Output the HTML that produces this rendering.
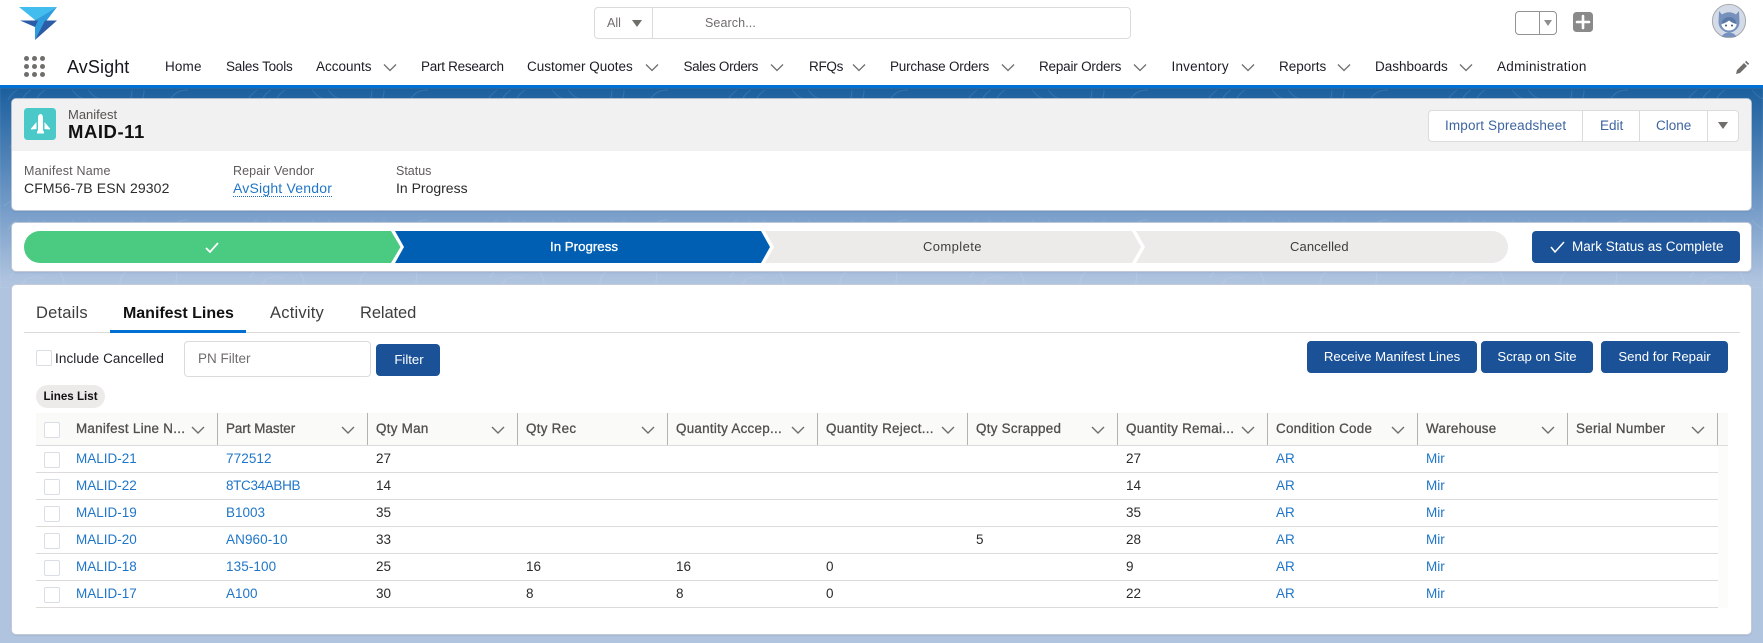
<!DOCTYPE html>
<html><head><meta charset="utf-8"><style>
*{box-sizing:border-box}
html,body{margin:0;padding:0;width:1763px;height:643px;overflow:hidden;background:#b0c4df}
body{position:relative;font-family:"Liberation Sans",sans-serif;font-size:13px;color:#181818}
.t{position:absolute;white-space:nowrap;line-height:16px}
.card{position:absolute;left:12px;width:1739px;background:#fff;border-radius:4px;box-shadow:0 0 0 1px rgba(200,205,215,.85),0 1px 2px rgba(40,60,100,.2)}
.nav{position:absolute;top:59px;line-height:16px;font-size:13.5px;color:#1c1e26;white-space:nowrap}
.blue{color:#1f76c8}
.btn{position:absolute;background:#1b5297;color:#fff;border-radius:4px;text-align:center;font-size:13.2px;height:32px;line-height:31px;white-space:nowrap}
.cb{position:absolute;width:16px;height:16px;background:#fff;border:1px solid #d8dde6;border-radius:2px}
.row{position:absolute;left:36px;width:1682px;height:27px;border-bottom:1px solid #dddbda}
.row span{position:absolute;top:5px;line-height:16px;font-size:13.5px;color:#2b2b2b}
.row a{position:absolute;top:5px;line-height:16px;font-size:13.5px;color:#1f76c8;text-decoration:none}
.h{position:absolute;top:413px;height:32px;line-height:32px;font-size:13.4px;color:#514f4d;white-space:nowrap;-webkit-text-stroke:.3px #514f4d;letter-spacing:.28px}
.d{position:absolute;top:413px;width:1px;height:32px;background:#b5b3b1}
</style></head><body>

<!-- page gradient and texture -->
<div style="position:absolute;left:0;top:88px;width:1763px;height:270px;background:linear-gradient(#1b5f9e 0,#6f98c6 42%,#b0c4df 72%,#b0c4df 100%)"></div>
<svg style="position:absolute;left:0;top:88px" width="1763" height="200" fill="none" stroke="#fff" stroke-opacity=".1" stroke-width="1">
<defs><pattern id="p" width="240" height="130" patternUnits="userSpaceOnUse">
<path d="M8 12c3-6 6-8 9-10M22 12c3-6 6-8 9-10M36 12c3-6 6-8 9-10M72 2c8 10 14 10 20 10M88 2c8 10 14 10 20 10M130 12c2-4 2-7 2-10M142 12c2-4 2-7 2-10M170 12c5-8 10-10 18-10"/>
<path d="M10 60c10-22 42-22 52-2s-16 36-32 26-8-30 12-24"/>
<path d="M110 40c24-16 60-8 66 14s-28 34-46 24-10-30 12-26"/>
<path d="M186 100c18-14 44-8 48 10M4 118c20-16 50-12 70 4M90 120c14-10 26-12 40-8"/>
</pattern></defs>
<rect width="1763" height="200" fill="url(#p)"/>
</svg>

<!-- top bar -->
<div style="position:absolute;left:0;top:0;width:1763px;height:85px;background:#fff"></div>
<div style="position:absolute;left:0;top:85px;width:1763px;height:3px;background:#0070d2"></div>

<svg style="position:absolute;left:19px;top:6px" width="40" height="36" viewBox="19 6 40 36">
<polygon points="19,7 57,7 35,20" fill="#43bdee"/>
<polygon points="57,7 35,20 35,40 47,20" fill="#2f9ddd"/>
<polygon points="20,20.500 38,20.500 35,27" fill="#2d5ca6"/>
<polygon points="45,20.500 57,20.500 35,40" fill="#2d5ca6"/>
</svg>

<svg style="position:absolute;left:23px;top:55px" width="24" height="24" fill="#706e6b">
<circle cx="3.500" cy="3.500" r="2.500"/><circle cx="11.500" cy="3.500" r="2.500"/><circle cx="19.500" cy="3.500" r="2.500"/>
<circle cx="3.500" cy="11.500" r="2.500"/><circle cx="11.500" cy="11.500" r="2.500"/><circle cx="19.500" cy="11.500" r="2.500"/>
<circle cx="3.500" cy="19.500" r="2.500"/><circle cx="11.500" cy="19.500" r="2.500"/><circle cx="19.500" cy="19.500" r="2.500"/>
</svg>
<div class="t" style="left:67px;top:56px;line-height:22px;font-size:18px;color:#16181f;letter-spacing:.1px">AvSight</div>

<!-- search -->
<div style="position:absolute;left:594px;top:7px;width:537px;height:32px;background:#fff;border:1px solid #dddbda;border-radius:4px"></div>
<div style="position:absolute;left:652px;top:8px;width:1px;height:30px;background:#dddbda"></div>
<div class="t" style="left:607px;top:15px;font-size:12.500px;color:#706e6b">All</div>
<svg style="position:absolute;left:632px;top:19px" width="11" height="9"><polygon points="0,1 10,1 5,8" fill="#706e6b"/></svg>
<div class="t" style="left:705px;top:15px;font-size:12.500px;color:#706e6b;letter-spacing:.1px">Search...</div>

<!-- favourites, plus, avatar -->
<div style="position:absolute;left:1515px;top:11px;width:42px;height:24px;background:#fff;border:1px solid #939393;border-radius:4px"></div>
<div style="position:absolute;left:1539px;top:11px;width:1px;height:24px;background:#939393"></div>
<svg style="position:absolute;left:1544px;top:20px" width="9" height="7"><polygon points="0,0 8,0 4,6" fill="#8e8e8e"/></svg>
<svg style="position:absolute;left:1573px;top:12px" width="20" height="20"><rect width="20" height="20" rx="3.500" fill="#8a8a8a"/><path d="M10 4v12M4 10h12" stroke="#fff" stroke-width="2.600" stroke-linecap="round"/></svg>
<svg style="position:absolute;left:1711px;top:3px" width="36" height="36" viewBox="0 0 36 36">
<circle cx="18" cy="18" r="16.600" fill="#d3dbe9" stroke="#a8a8a8" stroke-width="1"/>
<path d="M8 8l3 3.500a12 12 0 0 1 14 0L28 8l.5 11a10.500 10.500 0 0 1-21 0z" fill="#7692bc"/>
<ellipse cx="18" cy="21" rx="7.500" ry="6.500" fill="#fff"/>
<path d="M10.500 21c3-.5 5.500-2 7.500-3.500 2 1.500 4.500 3 7.500 3.500a7.500 7 0 0 0-15 0z" fill="#5c7aa8"/>
<circle cx="15" cy="22.500" r="1" fill="#34507f"/><circle cx="21" cy="22.500" r="1" fill="#34507f"/>
<path d="M11 34a7 4.500 0 0 1 14 0z" fill="#7692bc"/>
</svg>

<!-- nav -->
<div class="nav" style="left:165px;letter-spacing:.15px">Home</div>
<div class="nav" style="left:226px;letter-spacing:-.2px">Sales Tools</div>
<div class="nav" style="left:316px">Accounts</div>
<div class="nav" style="left:421px;letter-spacing:-.27px">Part Research</div>
<div class="nav" style="left:527px">Customer Quotes</div>
<div class="nav" style="left:683.500px;letter-spacing:-.35px">Sales Orders</div>
<div class="nav" style="left:809px;letter-spacing:-.3px">RFQs</div>
<div class="nav" style="left:890px;letter-spacing:-.2px">Purchase Orders</div>
<div class="nav" style="left:1039px;letter-spacing:-.2px">Repair Orders</div>
<div class="nav" style="left:1171.500px;letter-spacing:.2px">Inventory</div>
<div class="nav" style="left:1279px">Reports</div>
<div class="nav" style="left:1375px">Dashboards</div>
<div class="nav" style="left:1497px;letter-spacing:.3px">Administration</div>
<svg style="position:absolute;left:0;top:0" width="1763" height="85" fill="none" stroke="#706e6b" stroke-width="1.300">
<path d="M384 64.500l6 6 6-6M646 64.500l6 6 6-6M771 64.500l6 6 6-6M853 64.500l6 6 6-6M1002 64.500l6 6 6-6M1134 64.500l6 6 6-6M1242 64.500l6 6 6-6M1338 64.500l6 6 6-6M1460 64.500l6 6 6-6"/>
<path d="M1736 74l1-4 7-7 3 3-7 7zM1745 62l1.200-1.200 3 3L1748 65z" fill="#706e6b" stroke="none"/>
</svg>

<!-- header card -->
<div class="card" style="top:99px;height:111px;overflow:hidden">
  <div style="position:absolute;left:0;top:0;width:100%;height:52px;background:#f1f1f1"></div>
</div>
<svg style="position:absolute;left:24px;top:108px" width="32" height="32" viewBox="0 0 32 32">
<rect width="32" height="32" rx="3.500" fill="#4bc8c8"/>
<path d="M16.500 6c1.700 0 2.500 2 2.500 4v12l1 2v1.500h-7V24l1-2V10c0-2 .8-4 2.500-4z" fill="#fff"/>
<path d="M12.500 14L7 20.500c-.3.5 0 1 .5 1l5-.5zM20.500 14l5.500 6.500c.3.5 0 1-.5 1l-5-.5z" fill="#fff"/>
</svg>
<div class="t" style="left:68px;top:107px;font-size:13px;color:#55534f">Manifest</div>
<div class="t" style="left:68px;top:121px;line-height:22px;font-size:18.500px;font-weight:bold;color:#111;letter-spacing:.55px">MAID-11</div>
<div class="t" style="left:24px;top:163px;font-size:12.500px;color:#5e5c5a;letter-spacing:.2px">Manifest Name</div>
<div class="t" style="left:24px;top:180px;font-size:14px;color:#2b2b2b;letter-spacing:.13px">CFM56-7B ESN 29302</div>
<div class="t" style="left:233px;top:163px;font-size:12.500px;color:#5e5c5a;letter-spacing:.1px">Repair Vendor</div>
<div class="t blue" style="left:233px;top:180px;font-size:14px;border-bottom:1px dotted #1f6fc0;height:17px;letter-spacing:.2px">AvSight Vendor</div>
<div class="t" style="left:396px;top:163px;font-size:12.500px;color:#5e5c5a">Status</div>
<div class="t" style="left:396px;top:180px;font-size:14px;color:#2b2b2b">In Progress</div>

<!-- header buttons -->
<div style="position:absolute;left:1428px;top:110px;width:311px;height:32px;background:#fff;border:1px solid #dddbda;border-radius:4px"></div>
<div style="position:absolute;left:1582px;top:111px;width:1px;height:30px;background:#dddbda"></div>
<div style="position:absolute;left:1639px;top:111px;width:1px;height:30px;background:#dddbda"></div>
<div style="position:absolute;left:1707px;top:111px;width:1px;height:30px;background:#dddbda"></div>
<div class="t" style="left:1445px;top:118px;font-size:13.500px;color:#3d65a0;letter-spacing:.15px">Import Spreadsheet</div>
<div class="t" style="left:1600px;top:118px;font-size:13.500px;color:#3d65a0">Edit</div>
<div class="t" style="left:1656px;top:118px;font-size:13.500px;color:#3d65a0">Clone</div>
<svg style="position:absolute;left:1718px;top:121px" width="11" height="9"><polygon points="0,1 10,1 5,8" fill="#706e6b"/></svg>

<!-- path card -->
<div class="card" style="top:223px;height:48px"></div>
<svg style="position:absolute;left:0;top:231px" width="1520" height="32">
<path d="M40 0H391L400.500 16 391 32H40A16 16 0 0 1 40 0z" fill="#4bca81"/>
<path d="M395 0H761L770 16 761 32H395L404 16z" fill="#005fb2"/>
<path d="M765 0H1132L1141 16 1132 32H765L774 16z" fill="#ecebea"/>
<path d="M1136 0H1492A16 16 0 0 1 1492 32H1136L1145 16z" fill="#ecebea"/>
<path d="M206 17l4 4 8-9" fill="none" stroke="#fff" stroke-width="1.800"/>
</svg>
<div class="t" style="left:550px;top:239px;font-size:13.300px;color:#fff;-webkit-text-stroke:.3px #fff">In Progress</div>
<div class="t" style="left:923px;top:239px;font-size:13px;color:#3e3e3c;letter-spacing:.4px">Complete</div>
<div class="t" style="left:1290px;top:239px;font-size:13px;color:#3e3e3c;letter-spacing:.1px">Cancelled</div>
<div class="btn" style="left:1532px;top:231px;width:208px"></div>
<svg style="position:absolute;left:1550px;top:240px" width="15" height="14"><path d="M1 7l4 5 9-10" fill="none" stroke="#fff" stroke-width="1.500"/></svg>
<div class="t" style="left:1572px;top:239px;font-size:13.500px;color:#fff">Mark Status as Complete</div>

<!-- main card -->
<div class="card" style="top:285px;height:349px"></div>
<div style="position:absolute;left:24px;top:332px;width:1716px;height:1px;background:#dddbda"></div>
<div class="t" style="left:36px;top:304px;line-height:19px;font-size:16.500px;color:#3e3e3c;letter-spacing:.2px">Details</div>
<div class="t" style="left:123px;top:304px;line-height:19px;font-size:16px;font-weight:bold;color:#111;letter-spacing:-.02px">Manifest Lines</div>
<div class="t" style="left:270px;top:304px;line-height:19px;font-size:16.500px;color:#3e3e3c;letter-spacing:.22px">Activity</div>
<div class="t" style="left:360px;top:304px;line-height:19px;font-size:16.500px;color:#3e3e3c;letter-spacing:-.1px">Related</div>
<div style="position:absolute;left:110px;top:330px;width:136px;height:3px;background:#0070d2"></div>

<div class="cb" style="left:36px;top:350px"></div>
<div class="t" style="left:55px;top:351px;font-size:13.500px;color:#1c1e26;letter-spacing:.1px">Include Cancelled</div>
<div style="position:absolute;left:184px;top:341px;width:187px;height:36px;background:#fff;border:1px solid #dddbda;border-radius:4px"></div>
<div class="t" style="left:198px;top:351px;font-size:13.500px;color:#706e6b">PN Filter</div>
<div class="btn" style="left:376px;top:344px;width:64px;padding-left:2px">Filter</div>
<div class="btn" style="left:1307px;top:341px;width:170px">Receive Manifest Lines</div>
<div class="btn" style="left:1481px;top:341px;width:112px">Scrap on Site</div>
<div class="btn" style="left:1601px;top:341px;width:127px">Send for Repair</div>

<div class="t" style="left:36px;top:385px;width:69px;height:23px;line-height:24px;text-align:center;background:#ecebea;border-radius:12px;font-size:11.600px;font-weight:bold;color:#111">Lines List</div>

<!-- table header -->
<div style="position:absolute;left:36px;top:413px;width:1692px;height:32px;background:#fafaf9"></div>
<div style="position:absolute;left:1718px;top:446px;width:10px;height:162px;background:#fcfcfb"></div>
<div style="position:absolute;left:36px;top:445px;width:1692px;height:1px;background:#dddbda"></div>
<div class="d" style="left:217px"></div><div class="d" style="left:367px"></div><div class="d" style="left:517px"></div><div class="d" style="left:667px"></div><div class="d" style="left:817px"></div><div class="d" style="left:967px"></div><div class="d" style="left:1117px"></div><div class="d" style="left:1267px"></div><div class="d" style="left:1417px"></div><div class="d" style="left:1567px"></div><div class="d" style="left:1717px"></div>
<div class="cb" style="left:44px;top:422px"></div>
<div class="h" style="left:76px">Manifest Line N...</div>
<div class="h" style="left:226px;letter-spacing:0">Part Master</div>
<div class="h" style="left:376px">Qty Man</div>
<div class="h" style="left:526px">Qty Rec</div>
<div class="h" style="left:676px">Quantity Accep...</div>
<div class="h" style="left:826px">Quantity Reject...</div>
<div class="h" style="left:976px">Qty Scrapped</div>
<div class="h" style="left:1126px">Quantity Remai...</div>
<div class="h" style="left:1276px">Condition Code</div>
<div class="h" style="left:1426px">Warehouse</div>
<div class="h" style="left:1576px">Serial Number</div>
<svg style="position:absolute;left:0;top:420px" width="1763" height="20" fill="none" stroke="#706e6b" stroke-width="1.400">
<path d="M192 7l6 6 6-6M342 7l6 6 6-6M492 7l6 6 6-6M642 7l6 6 6-6M792 7l6 6 6-6M942 7l6 6 6-6M1092 7l6 6 6-6M1242 7l6 6 6-6M1392 7l6 6 6-6M1542 7l6 6 6-6M1692 7l6 6 6-6"/>
</svg>

<!-- rows -->
<div class="row" style="top:446px"><div class="cb" style="left:8px;top:6px"></div><a style="left:40px">MALID-21</a><a style="left:190px;letter-spacing:.1px">772512</a><span style="left:340px">27</span><span style="left:1090px">27</span><a style="left:1240px">AR</a><a style="left:1390px">Mir</a></div>
<div class="row" style="top:473px"><div class="cb" style="left:8px;top:6px"></div><a style="left:40px">MALID-22</a><a style="left:190px;letter-spacing:-.35px">8TC34ABHB</a><span style="left:340px">14</span><span style="left:1090px">14</span><a style="left:1240px">AR</a><a style="left:1390px">Mir</a></div>
<div class="row" style="top:500px"><div class="cb" style="left:8px;top:6px"></div><a style="left:40px">MALID-19</a><a style="left:190px">B1003</a><span style="left:340px">35</span><span style="left:1090px">35</span><a style="left:1240px">AR</a><a style="left:1390px">Mir</a></div>
<div class="row" style="top:527px"><div class="cb" style="left:8px;top:6px"></div><a style="left:40px">MALID-20</a><a style="left:190px;letter-spacing:.1px">AN960-10</a><span style="left:340px">33</span><span style="left:940px">5</span><span style="left:1090px">28</span><a style="left:1240px">AR</a><a style="left:1390px">Mir</a></div>
<div class="row" style="top:554px"><div class="cb" style="left:8px;top:6px"></div><a style="left:40px">MALID-18</a><a style="left:190px;letter-spacing:.1px">135-100</a><span style="left:340px">25</span><span style="left:490px">16</span><span style="left:640px">16</span><span style="left:790px">0</span><span style="left:1090px">9</span><a style="left:1240px">AR</a><a style="left:1390px">Mir</a></div>
<div class="row" style="top:581px"><div class="cb" style="left:8px;top:6px"></div><a style="left:40px">MALID-17</a><a style="left:190px">A100</a><span style="left:340px">30</span><span style="left:490px">8</span><span style="left:640px">8</span><span style="left:790px">0</span><span style="left:1090px">22</span><a style="left:1240px">AR</a><a style="left:1390px">Mir</a></div>

</body></html>
